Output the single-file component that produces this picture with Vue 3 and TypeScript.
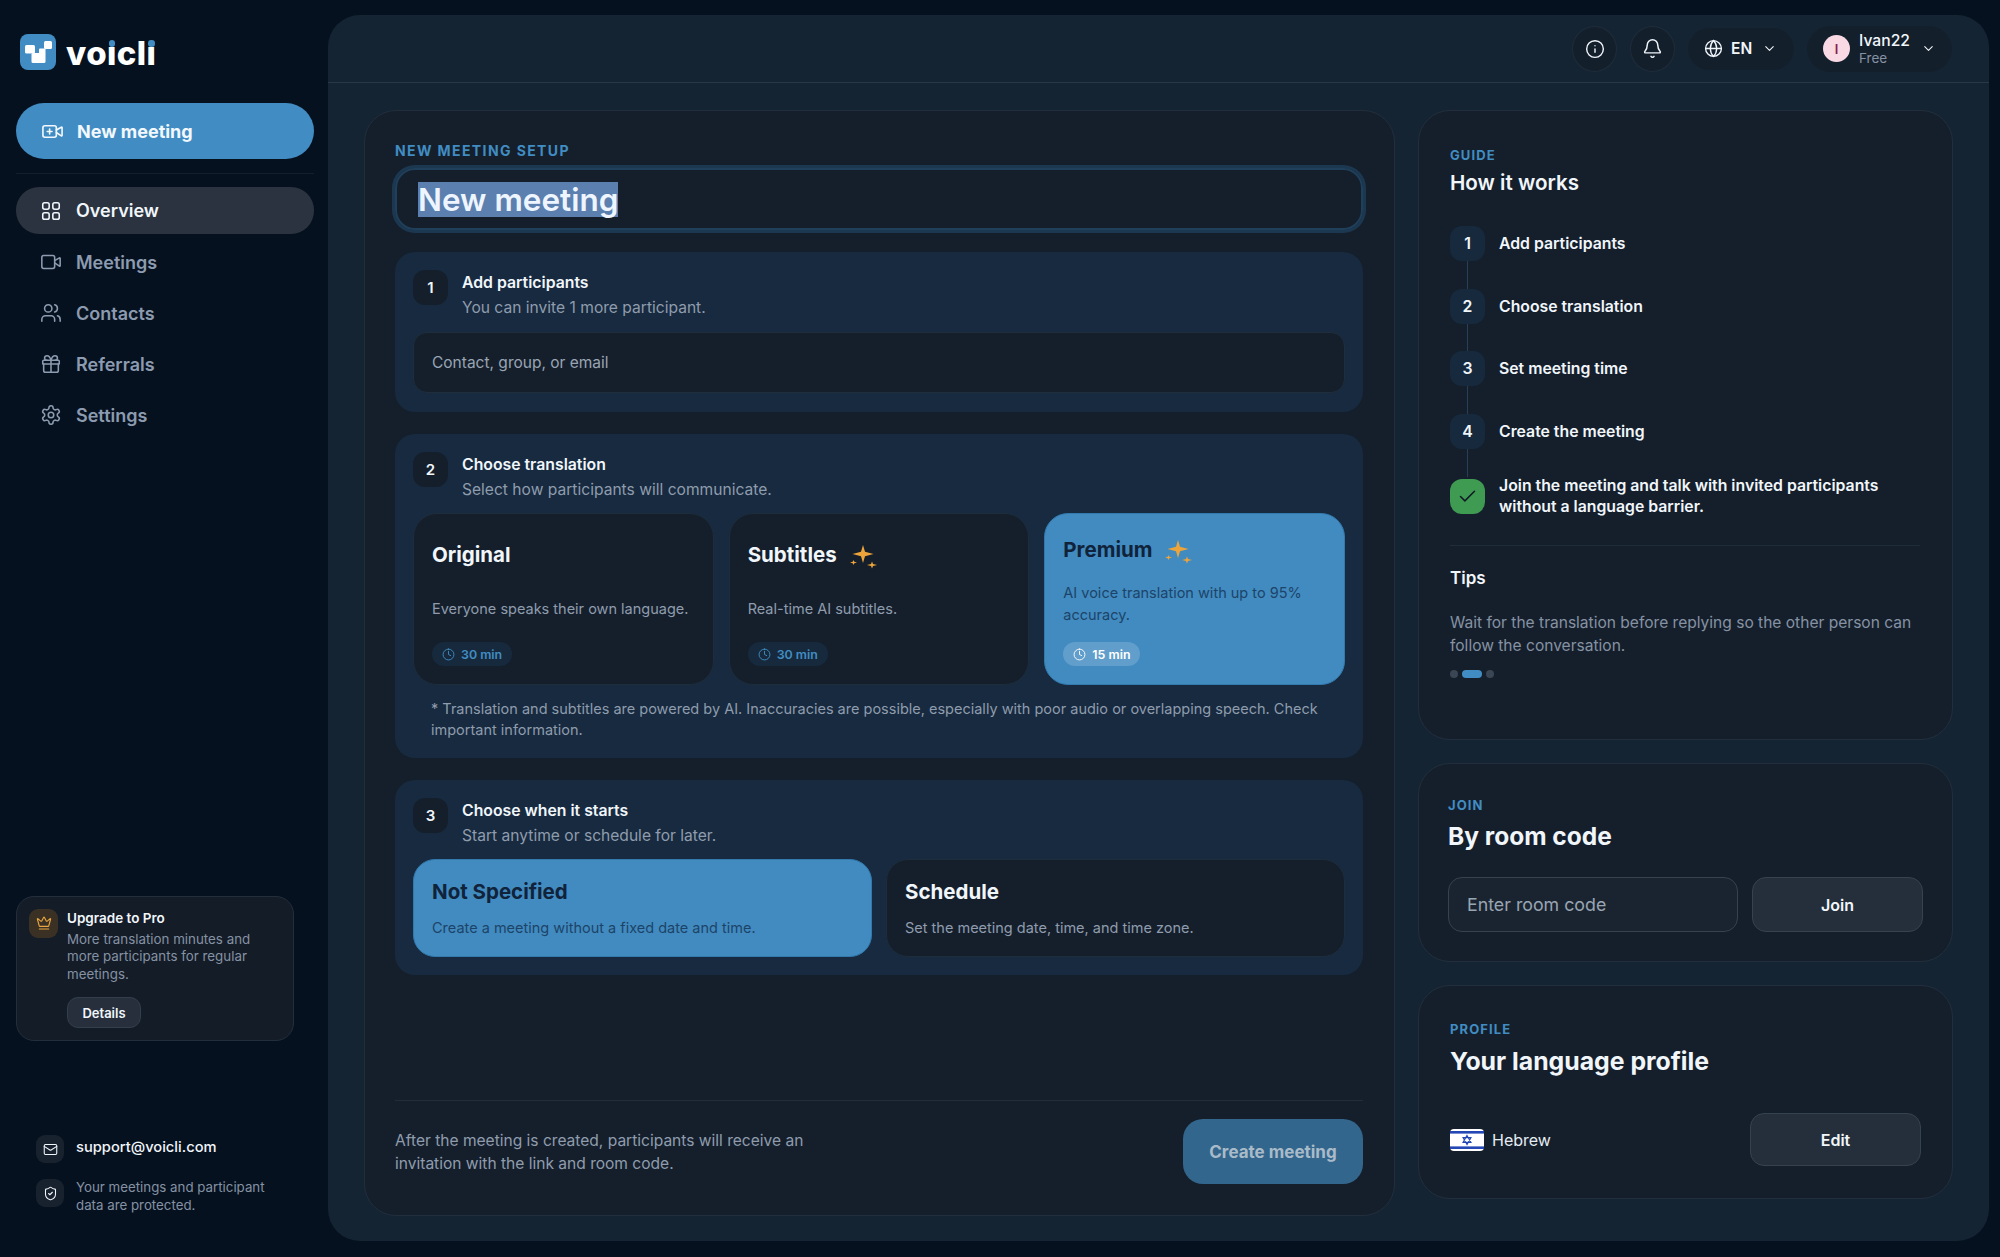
<template>
  <div class="app">
    <aside class="sidebar">
      <div class="brand">
        <svg class="logo" viewBox="0 0 36 36">
          <rect width="36" height="36" rx="8" fill="#418dc3" />
          <g fill="#fff">
            <rect x="5" y="11" width="10" height="8.500" rx="1.500" />
            <rect x="11.500" y="19" width="14" height="10" rx="1.500" />
            <rect x="19" y="14.500" width="6.500" height="6" rx="1" />
            <rect x="24" y="7" width="8" height="8" rx="1.500" />
          </g>
        </svg>
        <span class="wordmark">vo<span class="dotted">ı</span>cl<span class="dotted">ı</span></span>
      </div>

      <button class="new-btn">
        <Icon name="videoPlus" :size="23" />
        New meeting
      </button>
      <div class="side-rule"></div>

      <nav class="nav">
        <a v-for="item in navItems" :key="item.label" class="nav-item" :class="{ active: item.active }">
          <Icon :name="item.icon" :size="22" />
          {{ item.label }}
        </a>
      </nav>

      <div class="upgrade">
        <div class="crown"><Icon name="crown" :size="16" /></div>
        <div>
          <div class="upgrade-title">Upgrade to Pro</div>
          <p class="upgrade-text">More translation minutes and more participants for regular meetings.</p>
          <button class="details">Details</button>
        </div>
      </div>

      <div class="side-foot">
        <div class="foot-row">
          <span class="foot-icon"><Icon name="mail" :size="15" /></span>
          <span class="foot-mail">support@voicli.com</span>
        </div>
        <div class="foot-row">
          <span class="foot-icon"><Icon name="shield" :size="15" /></span>
          <span class="foot-text">Your meetings and participant data are protected.</span>
        </div>
      </div>
    </aside>

    <main class="panel">
      <header class="topbar">
        <button class="round"><Icon name="info" :size="20" /></button>
        <button class="round"><Icon name="bell" :size="21" /></button>
        <button class="lang">
          <Icon name="globe" :size="19" />
          <span>EN</span>
          <Icon name="chevron" :size="15" />
        </button>
        <button class="user">
          <span class="avatar">I</span>
          <span class="user-text">
            <span class="user-name">Ivan22</span>
            <span class="user-plan">Free</span>
          </span>
          <Icon name="chevron" :size="15" />
        </button>
      </header>

      <div class="content">
        <section class="setup">
          <div class="eyebrow">NEW MEETING SETUP</div>
          <div class="title-input"><span class="selected">New meeting</span></div>

          <div class="step-box first">
            <div class="step-head">
              <span class="num">1</span>
              <div>
                <div class="step-title">Add participants</div>
                <div class="step-sub">You can invite 1 more participant.</div>
              </div>
            </div>
            <div class="contact-input">Contact, group, or email</div>
          </div>

          <div class="step-box">
            <div class="step-head">
              <span class="num">2</span>
              <div>
                <div class="step-title">Choose translation</div>
                <div class="step-sub">Select how participants will communicate.</div>
              </div>
            </div>
            <div class="plans">
              <div v-for="plan in plans" :key="plan.name" class="plan" :class="{ picked: plan.picked }">
                <div class="plan-name">
                  {{ plan.name }}
                  <svg v-if="plan.sparkle" class="sparkle" viewBox="0 0 27 24">
                    <path fill="#eda43a" d="M13 0l2 6.800 8.500 2.200-8.500 2.200-2 6.800-2-6.800L2.500 9 11 6.800z" />
                    <path fill="#eda43a" d="M3.500 15l.8 1.800 2.700.7-2.700.7-.8 1.800-.8-1.800L0 17.500l2.700-.7z" />
                    <path fill="#eda43a" d="M22 16.500l1 2.500 4 1-4 1-1 2.500-1-2.500-4-1 4-1z" />
                  </svg>
                </div>
                <p class="plan-text">{{ plan.text }}</p>
                <span class="pill"><Icon name="clock" :size="13" />{{ plan.time }}</span>
              </div>
            </div>
            <p class="note">* Translation and subtitles are powered by AI. Inaccuracies are possible, especially with poor audio or overlapping speech. Check important information.</p>
          </div>

          <div class="step-box">
            <div class="step-head">
              <span class="num">3</span>
              <div>
                <div class="step-title">Choose when it starts</div>
                <div class="step-sub">Start anytime or schedule for later.</div>
              </div>
            </div>
            <div class="times">
              <div class="time picked">
                <div class="plan-name">Not Specified</div>
                <p class="time-text">Create a meeting without a fixed date and time.</p>
              </div>
              <div class="time">
                <div class="plan-name">Schedule</div>
                <p class="time-text">Set the meeting date, time, and time zone.</p>
              </div>
            </div>
          </div>

          <footer class="setup-foot">
            <p>After the meeting is created, participants will receive an invitation with the link and room code.</p>
            <button class="create">Create meeting</button>
          </footer>
        </section>

        <div class="rail">
          <section class="card guide">
            <div class="eyebrow small">GUIDE</div>
            <h2 class="guide-title">How it works</h2>
            <ol class="guide-steps">
              <li v-for="(step, i) in guideSteps" :key="step"><span class="guide-num">{{ i + 1 }}</span>{{ step }}</li>
              <li class="last">
                <span class="guide-done"><Icon name="check" :size="21" /></span>
                Join the meeting and talk with invited participants without a language barrier.
              </li>
            </ol>
            <div class="guide-rule"></div>
            <h3 class="tips-title">Tips</h3>
            <p class="tips-text">Wait for the translation before replying so the other person can follow the conversation.</p>
            <div class="dots"><i></i><i class="on"></i><i></i></div>
          </section>

          <section class="card join">
            <div class="eyebrow small">JOIN</div>
            <h2 class="card-title">By room code</h2>
            <div class="join-row">
              <div class="code-input">Enter room code</div>
              <button class="ghost">Join</button>
            </div>
          </section>

          <section class="card profile">
            <div class="eyebrow small">PROFILE</div>
            <h2 class="card-title">Your language profile</h2>
            <div class="profile-row">
              <svg class="flag" viewBox="0 0 34 22">
                <rect width="34" height="22" rx="4" fill="#fff" />
                <rect y="2" width="34" height="2.600" fill="#2347b5" />
                <rect y="17.400" width="34" height="2.600" fill="#2347b5" />
                <path fill="none" stroke="#2347b5" stroke-width="1.100" d="M17 6.400l4 7h-8zM17 15.600l-4-7h8z" />
              </svg>
              <span class="lang-name">Hebrew</span>
              <button class="ghost edit">Edit</button>
            </div>
          </section>
        </div>
      </div>
    </main>
  </div>
</template>

<script setup lang="ts">
import { h } from 'vue';

const iconPaths: Record<string, string[]> = {
  videoPlus: [
    'M16 13l5.200 3.500a.5.5 0 0 0 .8-.4V7.900a.5.5 0 0 0-.8-.4L16 10.500',
    'M4 6h10a2 2 0 0 1 2 2v8a2 2 0 0 1-2 2H4a2 2 0 0 1-2-2V8a2 2 0 0 1 2-2z',
    'M9 9.500v5M6.500 12h5',
  ],
  grid: [
    'M5 3h3a2 2 0 0 1 2 2v3a2 2 0 0 1-2 2H5a2 2 0 0 1-2-2V5a2 2 0 0 1 2-2z',
    'M16 3h3a2 2 0 0 1 2 2v3a2 2 0 0 1-2 2h-3a2 2 0 0 1-2-2V5a2 2 0 0 1 2-2z',
    'M5 14h3a2 2 0 0 1 2 2v3a2 2 0 0 1-2 2H5a2 2 0 0 1-2-2v-3a2 2 0 0 1 2-2z',
    'M16 14h3a2 2 0 0 1 2 2v3a2 2 0 0 1-2 2h-3a2 2 0 0 1-2-2v-3a2 2 0 0 1 2-2z',
  ],
  video: [
    'M16 13l5.200 3.500a.5.5 0 0 0 .8-.4V7.900a.5.5 0 0 0-.8-.4L16 10.500',
    'M4 5h10a2 2 0 0 1 2 2v10a2 2 0 0 1-2 2H4a2 2 0 0 1-2-2V7a2 2 0 0 1 2-2z',
  ],
  users: [
    'M16 21v-2a4 4 0 0 0-4-4H6a4 4 0 0 0-4 4v2',
    'M9 3a4 4 0 1 0 0 8a4 4 0 1 0 0-8z',
    'M22 21v-2a4 4 0 0 0-3-3.870',
    'M16 3.130a4 4 0 0 1 0 7.750',
  ],
  gift: [
    'M4 8h16a1 1 0 0 1 1 1v3H3V9a1 1 0 0 1 1-1z',
    'M12 8v13',
    'M20 12v7a2 2 0 0 1-2 2H6a2 2 0 0 1-2-2v-7',
    'M7.500 8a2.500 2.500 0 0 1 0-5A4.800 8 0 0 1 12 8a4.800 8 0 0 1 4.500-5 2.500 2.500 0 0 1 0 5',
  ],
  gear: [
    'M12.220 2h-.44a2 2 0 0 0-2 2v.18a2 2 0 0 1-1 1.730l-.43.25a2 2 0 0 1-2 0l-.15-.08a2 2 0 0 0-2.730.73l-.22.38a2 2 0 0 0 .73 2.730l.15.1a2 2 0 0 1 1 1.720v.51a2 2 0 0 1-1 1.740l-.15.09a2 2 0 0 0-.73 2.730l.22.38a2 2 0 0 0 2.730.73l.15-.08a2 2 0 0 1 2 0l.43.25a2 2 0 0 1 1 1.730V20a2 2 0 0 0 2 2h.44a2 2 0 0 0 2-2v-.18a2 2 0 0 1 1-1.730l.43-.25a2 2 0 0 1 2 0l.15.08a2 2 0 0 0 2.730-.73l.22-.39a2 2 0 0 0-.73-2.730l-.15-.08a2 2 0 0 1-1-1.740v-.5a2 2 0 0 1 1-1.740l.15-.09a2 2 0 0 0 .73-2.730l-.22-.38a2 2 0 0 0-2.730-.73l-.15.08a2 2 0 0 1-2 0l-.43-.25a2 2 0 0 1-1-1.730V4a2 2 0 0 0-2-2z',
    'M12 9a3 3 0 1 0 0 6a3 3 0 1 0 0-6z',
  ],
  crown: [
    'M11.560 3.270a.5.5 0 0 1 .88 0L15.390 8.870a1 1 0 0 0 1.520.29L21.180 5.500a.5.5 0 0 1 .8.52l-2.830 10.250a1 1 0 0 1-.96.73H5.810a1 1 0 0 1-.96-.73L2.020 6.020a.5.5 0 0 1 .8-.52l4.280 3.660a1 1 0 0 0 1.520-.29z',
    'M5 21h14',
  ],
  mail: [
    'M4 4h16a2 2 0 0 1 2 2v12a2 2 0 0 1-2 2H4a2 2 0 0 1-2-2V6a2 2 0 0 1 2-2z',
    'M22 7l-8.970 5.700a1.940 1.940 0 0 1-2.060 0L2 7',
  ],
  shield: [
    'M20 13c0 5-3.500 7.500-7.660 8.950a1 1 0 0 1-.67-.01C7.500 20.500 4 18 4 13V6a1 1 0 0 1 1-1c2 0 4.500-1.200 6.240-2.720a1.170 1.170 0 0 1 1.520 0C14.510 3.810 17 5 19 5a1 1 0 0 1 1 1z',
    'M9 12l2 2 4-4',
  ],
  info: ['M12 2a10 10 0 1 0 0 20a10 10 0 1 0 0-20z', 'M12 16v-4', 'M12 8h.01'],
  bell: [
    'M10.270 21a2 2 0 0 0 3.460 0',
    'M3.260 15.330A1 1 0 0 0 4 17h16a1 1 0 0 0 .74-1.670C19.410 13.960 18 12.500 18 8A6 6 0 0 0 6 8c0 4.500-1.410 5.960-2.740 7.330',
  ],
  globe: [
    'M12 2a10 10 0 1 0 0 20a10 10 0 1 0 0-20z',
    'M12 2a14.500 14.500 0 0 0 0 20 14.500 14.500 0 0 0 0-20',
    'M2 12h20',
  ],
  chevron: ['M6 9l6 6 6-6'],
  clock: ['M12 2a10 10 0 1 0 0 20a10 10 0 1 0 0-20z', 'M12 6v6l4 2'],
  check: ['M20 6L9 17l-5-5'],
};

const Icon = (props: { name: string; size: number }) =>
  h(
    'svg',
    {
      width: props.size,
      height: props.size,
      viewBox: '0 0 24 24',
      fill: 'none',
      stroke: 'currentColor',
      'stroke-width': 1.7,
      'stroke-linecap': 'round',
      'stroke-linejoin': 'round',
      style: { flexShrink: 0 },
    },
    iconPaths[props.name].map((d) => h('path', { d })),
  );
Icon.props = ['name', 'size'];

const navItems = [
  { label: 'Overview', icon: 'grid', active: true },
  { label: 'Meetings', icon: 'video' },
  { label: 'Contacts', icon: 'users' },
  { label: 'Referrals', icon: 'gift' },
  { label: 'Settings', icon: 'gear' },
];

const plans = [
  { name: 'Original', text: 'Everyone speaks their own language.', time: '30 min' },
  { name: 'Subtitles', text: 'Real-time AI subtitles.', time: '30 min', sparkle: true },
  { name: 'Premium', text: 'AI voice translation with up to 95% accuracy.', time: '15 min', sparkle: true, picked: true },
];

const guideSteps = ['Add participants', 'Choose translation', 'Set meeting time', 'Create the meeting'];
</script>

<style scoped>
.app {
  display: flex;
  height: 1257px;
  overflow: hidden;
  background: #06111f;
  color: #f1f6fb;
  font-family: Inter, "Noto Sans", sans-serif;
}
button {
  font-family: inherit;
  cursor: pointer;
}
p, h2, h3, ol {
  margin: 0;
  padding: 0;
}

/* sidebar */
.sidebar {
  width: 328px;
  flex-shrink: 0;
  box-sizing: border-box;
  display: flex;
  flex-direction: column;
  padding: 34px 14px 43px 16px;
}
.brand {
  display: flex;
  align-items: center;
  gap: 10px;
  height: 36px;
  margin-left: 4px;
}
.logo {
  width: 36px;
  height: 36px;
}
.wordmark {
  margin-top: 2px;
  font-size: 33px;
  font-weight: 800;
  line-height: 36px;
  letter-spacing: 0.4px;
  color: #fff;
}
.dotted {
  position: relative;
}
.dotted::before {
  content: "";
  position: absolute;
  left: 50%;
  top: 7px;
  width: 6.500px;
  height: 6.500px;
  margin-left: -3.250px;
  border-radius: 50%;
  background: #418dc3;
}
.new-btn {
  display: flex;
  align-items: center;
  gap: 13px;
  height: 56px;
  margin-top: 33px;
  padding: 0 0 0 25px;
  border: 0;
  border-radius: 28px;
  background: #418dc3;
  color: #f2f8fd;
  font-size: 18px;
  font-weight: 700;
}
.side-rule {
  height: 1px;
  margin: 14px 0 13px;
  background: #121f2e;
}
.nav {
  display: flex;
  flex-direction: column;
  gap: 5px;
}
.nav-item {
  display: flex;
  align-items: center;
  gap: 14px;
  height: 46px;
  padding-left: 24px;
  border-radius: 23px;
  color: #8c9bb0;
  font-size: 18px;
  font-weight: 600;
}
.nav-item.active {
  height: 47px;
  background: #2a333f;
  color: #f1f6fb;
}
.upgrade {
  display: flex;
  gap: 9px;
  width: 278px;
  box-sizing: border-box;
  margin-top: auto;
  padding: 12px;
  border: 1px solid #232e3c;
  border-radius: 18px;
  background: #141c28;
}
.crown {
  display: flex;
  align-items: center;
  justify-content: center;
  width: 29px;
  height: 29px;
  flex-shrink: 0;
  border-radius: 9px;
  background: #3a3124;
  color: #e9a643;
}
.upgrade-title {
  font-size: 13.500px;
  font-weight: 600;
  line-height: 18px;
}
.upgrade-text {
  margin-top: 4px;
  color: #8592a3;
  font-size: 13.350px;
  line-height: 17.400px;
}
.details {
  display: block;
  width: 74px;
  height: 31px;
  margin-top: 14px;
  padding: 0;
  border: 1px solid #333e4c;
  border-radius: 11px;
  background: #262f3b;
  color: #f1f6fb;
  font-size: 13px;
  font-weight: 600;
}
.side-foot {
  display: flex;
  flex-direction: column;
  gap: 16px;
  margin-top: 94px;
  padding-left: 20px;
}
.foot-row {
  display: flex;
  align-items: flex-start;
  gap: 12px;
}
.foot-icon {
  display: flex;
  align-items: center;
  justify-content: center;
  width: 28px;
  height: 28px;
  flex-shrink: 0;
  border-radius: 9px;
  background: #18222f;
  color: #f1f6fb;
}
.foot-mail {
  font-size: 14.700px;
  font-weight: 500;
  line-height: 24px;
}
.foot-text {
  width: 200px;
  color: #8592a3;
  font-size: 13.300px;
  line-height: 17.400px;
}

/* main panel */
.panel {
  flex: 1;
  display: flex;
  flex-direction: column;
  margin: 15px 11px 16px 0;
  border-radius: 32px;
  background: #152433;
}
.topbar {
  display: flex;
  align-items: center;
  justify-content: flex-end;
  gap: 13px;
  height: 68px;
  flex-shrink: 0;
  box-sizing: border-box;
  padding-right: 37px;
  border-bottom: 1px solid #2a3846;
}
.round {
  display: flex;
  align-items: center;
  justify-content: center;
  width: 45px;
  height: 46px;
  padding: 0;
  border: 1px solid #1f2c3a;
  border-radius: 50%;
  background: #141f2c;
  color: #f1f6fb;
}
.lang {
  display: flex;
  align-items: center;
  gap: 8px;
  width: 106px;
  height: 42px;
  box-sizing: border-box;
  padding: 0 0 0 16px;
  border: 0;
  border-radius: 21px;
  background: #141f2c;
  color: #f1f6fb;
  font-size: 15.500px;
  font-weight: 600;
}
.lang span {
  margin-right: 2px;
}
.user {
  display: flex;
  align-items: center;
  width: 145px;
  height: 46px;
  box-sizing: border-box;
  padding: 0 0 0 16px;
  border: 0;
  border-radius: 23px;
  background: #141f2c;
  color: #f1f6fb;
}
.avatar {
  display: flex;
  align-items: center;
  justify-content: center;
  width: 27px;
  height: 27px;
  border-radius: 50%;
  background: #f8d9e4;
  color: #8a1f42;
  font-size: 13px;
  font-weight: 600;
}
.user-text {
  display: flex;
  flex-direction: column;
  width: 62px;
  margin: 0 0 0 9px;
  text-align: left;
}
.user-name {
  font-size: 15.700px;
  font-weight: 500;
  line-height: 18px;
}
.user-plan {
  color: #8592a3;
  font-size: 13.500px;
  line-height: 16px;
}
.content {
  flex: 1;
  display: flex;
  gap: 23px;
  min-height: 0;
  padding: 27px 36px 25px;
}

/* setup card */
.setup {
  width: 1031px;
  box-sizing: border-box;
  display: flex;
  flex-direction: column;
  gap: 22px;
  padding: 31px 31px 31px 30px;
  border: 1px solid #222e3c;
  border-radius: 32px;
  background: #151f2c;
}
.eyebrow {
  color: #418dc3;
  font-size: 14px;
  font-weight: 700;
  line-height: 18px;
  letter-spacing: 1.400px;
}
.eyebrow.small {
  font-size: 13px;
  letter-spacing: 1.100px;
}
.title-input {
  display: flex;
  align-items: center;
  height: 62px;
  box-sizing: border-box;
  margin-top: -14px;
  padding-left: 21px;
  border: 2px solid #1f3f5b;
  border-radius: 20px;
  box-shadow: 0 0 0 3px #1c3850;
  font-size: 31.500px;
  font-weight: 600;
}
.selected {
  background: #5b7fae;
  color: #eef5ff;
  line-height: 35px;
}
.step-box {
  padding: 18px;
  border-radius: 20px;
  background: #172a3f;
}
.step-box.first {
  padding-bottom: 19px;
}
.step-head {
  display: flex;
  gap: 14px;
  height: 45px;
}
.num {
  display: flex;
  align-items: center;
  justify-content: center;
  width: 35px;
  height: 35px;
  flex-shrink: 0;
  border-radius: 12px;
  background: #151f2c;
  font-size: 15px;
  font-weight: 600;
}
.step-title {
  margin-top: 3px;
  font-size: 15.800px;
  font-weight: 600;
  line-height: 20px;
}
.step-sub {
  margin-top: 5px;
  color: #8f9cad;
  font-size: 15.600px;
  line-height: 20px;
}
.contact-input {
  display: flex;
  align-items: center;
  height: 61px;
  box-sizing: border-box;
  margin-top: 17px;
  padding-left: 18px;
  border: 1px solid #1f2d3c;
  border-radius: 14px;
  background: #151f2c;
  color: #99a5b3;
  font-size: 15.500px;
}
.plans {
  display: grid;
  grid-template-columns: 1fr 1fr 1fr;
  gap: 15px;
  margin-top: 16px;
}
.plan {
  display: flex;
  flex-direction: column;
  align-items: flex-start;
  height: 172px;
  box-sizing: border-box;
  padding: 27px 18px 18px;
  border: 1px solid #1e2c3c;
  border-radius: 24px;
  background: #151f2c;
}
.plan-name {
  display: flex;
  align-items: center;
  gap: 13px;
  font-size: 20.500px;
  font-weight: 700;
  line-height: 28px;
}
.sparkle {
  width: 27px;
  height: 24px;
  margin-top: 4px;
}
.plan-text {
  margin-top: 29px;
  color: #8f9cad;
  font-size: 14.500px;
  line-height: 22px;
}
.pill {
  display: inline-flex;
  align-items: center;
  gap: 6px;
  height: 24px;
  margin-top: auto;
  padding: 0 10px;
  border-radius: 12px;
  background: #172a3d;
  color: #418dc3;
  font-size: 12.400px;
  font-weight: 600;
}
.plan.picked,
.time.picked {
  border-color: #3279ad;
  background: #418bc1;
}
.plan.picked {
  padding-top: 22px;
}
.picked .plan-name {
  color: #10233a;
}
.picked .plan-text {
  margin-top: 18px;
  color: #1d4468;
}
.picked .pill {
  background: rgba(255, 255, 255, 0.17);
  color: #fff;
}
.note {
  margin: 13px 0 0 18px;
  color: #8f9cad;
  font-size: 14.500px;
  line-height: 21px;
}
.times {
  display: grid;
  grid-template-columns: 1fr 1fr;
  gap: 14px;
  margin-top: 16px;
}
.time {
  height: 98px;
  box-sizing: border-box;
  padding: 18px 18px 0;
  border: 1px solid #1e2c3c;
  border-radius: 22px;
  background: #151f2c;
}
.time-text {
  margin-top: 11px;
  color: #8f9cad;
  font-size: 14.500px;
  line-height: 22px;
}
.picked .time-text {
  color: #1d4468;
}
.setup-foot {
  display: flex;
  align-items: center;
  justify-content: space-between;
  margin-top: auto;
  padding-top: 18px;
  border-top: 1px solid #222d3a;
}
.setup-foot p {
  width: 440px;
  color: #8f9cad;
  font-size: 15.550px;
  line-height: 23px;
}
.create {
  width: 180px;
  height: 65px;
  padding: 0;
  border: 0;
  border-radius: 20px;
  background: #33668c;
  color: #a9bbc9;
  font-size: 17px;
  font-weight: 700;
}

/* right rail */
.rail {
  width: 535px;
  display: flex;
  flex-direction: column;
  gap: 23px;
}
.card {
  box-sizing: border-box;
  padding: 35px 31px 0;
  border: 1px solid #222e3c;
  border-radius: 32px;
  background: #151f2c;
}
.guide {
  height: 630px;
}
.guide-title {
  margin-top: 5px;
  font-size: 20.600px;
  font-weight: 600;
  line-height: 28px;
}
.guide-steps {
  display: flex;
  flex-direction: column;
  gap: 27.500px;
  margin-top: 29px;
  list-style: none;
}
.guide-steps li {
  display: flex;
  align-items: center;
  gap: 14px;
  min-height: 35px;
  font-size: 15.800px;
  font-weight: 600;
  line-height: 21px;
}
.guide-steps li.last {
  width: 450px;
  margin-top: -1px;
}
.guide-num,
.guide-done {
  position: relative;
  display: flex;
  align-items: center;
  justify-content: center;
  width: 35px;
  height: 35px;
  flex-shrink: 0;
  border-radius: 12px;
  background: #172a3d;
}
.guide-num::after {
  content: "";
  position: absolute;
  left: 17px;
  top: 100%;
  width: 1px;
  height: 28px;
  background: #27405a;
}
.guide-done {
  background: #3f9a52;
  color: #0f1a26;
}
.guide-rule {
  height: 1px;
  margin-top: 27.500px;
  width: 470px;
  background: #212c39;
}
.tips-title {
  margin-top: 20px;
  font-size: 17px;
  font-weight: 600;
  line-height: 24px;
}
.tips-text {
  margin-top: 21px;
  color: #8592a3;
  font-size: 15.550px;
  line-height: 23px;
}
.dots {
  display: flex;
  align-items: center;
  gap: 4px;
  margin-top: 13px;
}
.dots i {
  width: 8px;
  height: 8px;
  border-radius: 4px;
  background: #3b4655;
}
.dots i.on {
  width: 20px;
  background: #418dc3;
}
.join {
  height: 199px;
  padding: 32px 29px 0;
}
.profile {
  height: 214px;
  padding: 34px 31px 0;
}
.card-title {
  margin-top: 7px;
  font-size: 24.500px;
  font-weight: 700;
  line-height: 32px;
}
.join .card-title {
  margin-top: 6px;
}
.profile .card-title {
  font-size: 24.800px;
}
.join-row {
  display: flex;
  gap: 14px;
  margin-top: 25px;
}
.code-input {
  display: flex;
  align-items: center;
  width: 290px;
  height: 55px;
  box-sizing: border-box;
  padding-left: 18px;
  border: 1px solid #37424f;
  border-radius: 14px;
  background: #1a2430;
  color: #99a5b3;
  font-size: 17.800px;
}
.ghost {
  width: 171px;
  height: 55px;
  padding: 0;
  border: 1px solid #37424f;
  border-radius: 14px;
  background: #252f3b;
  color: #f1f6fb;
  font-size: 16px;
  font-weight: 600;
}
.profile-row {
  display: flex;
  align-items: center;
  margin-top: 36px;
  width: 471px;
}
.flag {
  width: 34px;
  height: 22px;
}
.lang-name {
  margin-left: 8px;
  font-size: 16px;
  color: #e6ecf2;
}
.ghost.edit {
  height: 53px;
  margin-left: auto;
}
</style>

<style>
html, body {
  margin: 0;
  background: #06111f;
}
</style>
